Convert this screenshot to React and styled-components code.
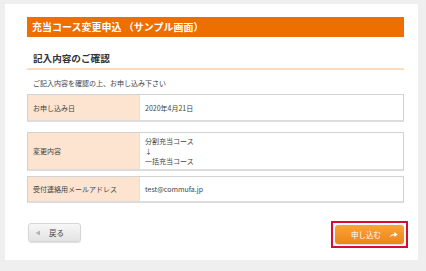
import React from 'react';
import styled, { createGlobalStyle } from 'styled-components';

const GlobalStyle = createGlobalStyle`
  html, body {
    margin: 0;
    padding: 0;
    background: #efefef;
  }
  body {
    font-family: 'Noto Sans CJK JP', 'Noto Sans', sans-serif;
    color: #333;
  }
`;

const rows = [
  { label: 'お申し込み日', value: ['2020年4月21日'], height: 28, gap: 10 },
  { label: '変更内容', value: ['分割充当コース', '↓', '一括充当コース'], height: 39, gap: 5 },
  { label: '受付連絡用メールアドレス', value: ['test@commufa.jp'], height: 27, gap: 0 },
];

const App = () => {
  return (
    <>
      <GlobalStyle />
      <StyledPage>
        <Panel>
          <TitleBar>充当コース変更申込 （サンプル画面）</TitleBar>
          <Heading>記入内容のご確認</Heading>
          <Intro>ご記入内容を確認の上、お申し込み下さい</Intro>

          {rows.map((row) => (
            <InfoTable key={row.label} $height={row.height} $gap={row.gap}>
              <LabelCell>{row.label}</LabelCell>
              <ValueCell>
                {row.value.map((line, i) => (
                  <span key={i}>{line}</span>
                ))}
              </ValueCell>
            </InfoTable>
          ))}

          <ButtonRow>
            <BackButton>
              <svg width="6" height="6" viewBox="0 0 6 6">
                <path d="M0.5 3 L5 0.6 L5 5.4 Z" fill="#b5b5b5" />
              </svg>
              <span>戻る</span>
            </BackButton>
            <Highlight>
              <ApplyButton>
                <span>申し込む</span>
                <svg width="9" height="7" viewBox="0 0 9 7">
                  <path d="M0.6 6.4 C1.4 3.8 3.2 2.9 5.4 2.9 L5.4 1 L8.6 3.5 L5.4 6 L5.4 4.2 C3.4 4.2 2 4.9 0.6 6.4 Z" fill="#fff" />
                </svg>
              </ApplyButton>
            </Highlight>
          </ButtonRow>
        </Panel>
      </StyledPage>
    </>
  );
};

export default App;

const StyledPage = styled.div`
  padding: 4px 8px 5px 5px;
`;

const Panel = styled.div`
  width: 413px;
  box-sizing: border-box;
  background: #fff;
  padding: 13px 14px 12px 22px;
  display: flex;
  flex-direction: column;
`;

const TitleBar = styled.div`
  height: 20px;
  line-height: 20px;
  background: #ee6e00;
  color: #fff;
  font-size: 10px;
  font-weight: bold;
  padding-left: 5px;
  white-space: nowrap;
`;

const Heading = styled.div`
  margin-top: 12px;
  height: 19px;
  line-height: 19px;
  padding-left: 6px;
  font-size: 9.6px;
  font-weight: bold;
  color: #333;
  border-bottom: 2px solid #fbdcc2;
`;

const Intro = styled.div`
  margin-top: 8px;
  padding-left: 6px;
  font-size: 7px;
  line-height: 10px;
  color: #444;
`;

const InfoTable = styled.div`
  margin-top: 6px;
  margin-bottom: ${(p) => p.$gap - 6}px;
  height: ${(p) => p.$height}px;
  box-sizing: border-box;
  display: flex;
  border: 1px solid #d2d2d2;
  border-bottom: 2px solid #dcdcdc;
  font-size: 7px;
  color: #444;
`;

const LabelCell = styled.div`
  width: 112px;
  flex-shrink: 0;
  background: #fde4d1;
  border-right: 1px solid #e2e2e2;
  display: flex;
  align-items: center;
  padding-left: 5px;
  box-sizing: border-box;
`;

const ValueCell = styled.div`
  flex: 1;
  display: flex;
  flex-direction: column;
  justify-content: center;
  padding-left: 5px;
  line-height: 10px;
  color: #444;
`;

const ButtonRow = styled.div`
  margin-top: 24px;
  display: flex;
  justify-content: space-between;
  align-items: flex-start;
  padding-left: 1px;
`;

const BackButton = styled.div`
  margin-top: 2px;
  width: 53px;
  height: 19px;
  box-sizing: border-box;
  border: 1px solid #d6d6d6;
  border-radius: 3px;
  background: linear-gradient(#f7f7f7, #e3e3e3);
  box-shadow: 0 1px 1px rgba(0, 0, 0, 0.12);
  display: flex;
  align-items: center;
  gap: 8px;
  padding-left: 6px;
  font-size: 7.5px;
  color: #444;
`;

const Highlight = styled.div`
  margin-right: -4px;
  width: 77px;
  height: 27px;
  box-sizing: border-box;
  border: 2px solid #db0a34;
  padding: 2px;
`;

const ApplyButton = styled.div`
  height: 19px;
  border-radius: 3px;
  background: linear-gradient(#f7a53b, #ef8417);
  box-shadow: 0 1px 1px rgba(0, 0, 0, 0.15);
  display: flex;
  align-items: center;
  justify-content: space-between;
  padding: 0 6px 0 16px;
  color: #fff;
  font-size: 7.5px;
`;
